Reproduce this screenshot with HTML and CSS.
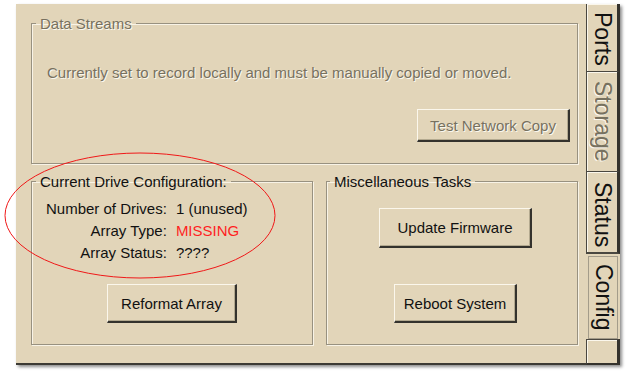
FILE: index.html
```html
<!DOCTYPE html>
<html lang="en">
<head>
    <meta charset="UTF-8">
    <title>Config</title>
    <link rel="stylesheet" href="styles.css">
</head>
<body>
    <div class="window">
        <div class="panel">
            <fieldset class="group streams">
                <legend class="disabled">Data Streams</legend>
                <p class="note disabled">Currently set to record locally and must be manually copied or moved.</p>
                <div class="row-end">
                    <button class="btn btn-test" disabled>Test Network Copy</button>
                </div>
            </fieldset>

            <div class="lower">
                <fieldset class="group drive">
                    <legend>Current Drive Configuration:</legend>
                    <dl class="facts">
                        <dt>Number of Drives:</dt>
                        <dd>1 (unused)</dd>
                        <dt>Array Type:</dt>
                        <dd class="missing">MISSING</dd>
                        <dt>Array Status:</dt>
                        <dd>????</dd>
                    </dl>
                    <div class="row-center">
                        <button class="btn btn-reformat">Reformat Array</button>
                    </div>
                </fieldset>

                <fieldset class="group misc">
                    <legend>Miscellaneous Tasks</legend>
                    <div class="row-center first">
                        <button class="btn btn-firmware">Update Firmware</button>
                    </div>
                    <div class="row-center">
                        <button class="btn btn-reboot">Reboot System</button>
                    </div>
                </fieldset>
            </div>
        </div>

        <div class="tabs">
            <div class="tab tab-ports">Ports</div>
            <div class="tab tab-storage disabled">Storage</div>
            <div class="tab tab-status">Status</div>
            <div class="tab tab-config">Config</div>
            <div class="tab tab-filler"></div>
        </div>
    </div>

    <svg class="callout" width="634" height="374" viewBox="0 0 634 374">
        <ellipse cx="140" cy="215.5" rx="135" ry="62.5" fill="none" stroke="#f01818" stroke-width="1"/>
    </svg>
</body>
</html>
```

FILE: styles.css
```css
body {
    margin: 0;
    background: #fff;
    font-family: 'Liberation Sans', Arial, sans-serif;
    font-size: 15px;
    color: #111;
    position: relative;
    width: 634px;
    height: 374px;
    overflow: hidden;
}
.window {
    display: flex;
    margin: 4px 0 0 16px;
    width: 604px;
    height: 361px;
    background: #e2d5b9;
    box-shadow: 2px 2px 3px rgba(0, 0, 0, 0.45);
}
.panel {
    box-sizing: border-box;
    width: 570px;
    height: 361px;
    padding: 11px 8px 0 15px;
    border-bottom: 2px solid #3c3a34;
}
.disabled {
    color: #77715f;
    text-shadow: 1px 1px 0 #fbf8ef;
}
.group {
    box-sizing: border-box;
    margin: 0;
    padding: 0;
    min-width: 0;
    border: 1px solid #989180;
    box-shadow: 1px 1px 0 #f8f3e6, inset 1px 1px 0 #f8f3e6;
}
.group legend {
    margin-left: 4px;
    padding: 0 4px;
    line-height: 17px;
}
.streams {
    width: 547px;
    height: 149px;
}
.note {
    margin: 32px 0 0 15px;
    line-height: 17px;
}
.row-end {
    display: flex;
    justify-content: flex-end;
    padding-right: 7px;
    margin-top: 28px;
}
.row-center {
    display: flex;
    justify-content: center;
}
.lower {
    display: flex;
    gap: 13px;
    margin-top: 9px;
}
.drive {
    width: 282px;
    height: 172px;
}
.misc {
    width: 252px;
    height: 172px;
}
.misc legend {
    margin-left: 3px;
}
.misc .row-center {
    padding-left: 7px;
}
.facts {
    display: grid;
    grid-template-columns: auto auto;
    justify-content: start;
    column-gap: 9px;
    margin: 8px 0 20px 14px;
    line-height: 22px;
}
.facts dt {
    text-align: right;
}
.facts dd {
    margin: 0;
}
.missing {
    color: #ff1f1f;
}
.misc .first {
    margin: 18px 0 36px;
}
.btn {
    box-sizing: border-box;
    font-family: inherit;
    font-size: 15px;
    color: #111;
    background: #e2d5b9;
    border-style: solid;
    border-width: 1px 2px 2px 1px;
    border-color: #fbf7ec #34322d #34322d #fbf7ec;
    box-shadow: inset -1px -1px 0 #b3a98f;
    padding: 0;
}
.btn:disabled {
    color: #77715f;
    text-shadow: 1px 1px 0 #fbf8ef;
}
.btn-test {
    width: 153px;
    height: 33px;
}
.btn-reformat {
    width: 130px;
    height: 39px;
}
.btn-firmware {
    width: 153px;
    height: 40px;
}
.btn-reboot {
    width: 123px;
    height: 39px;
}
.tabs {
    display: flex;
    flex-direction: column;
    width: 34px;
}
.tab {
    box-sizing: border-box;
    writing-mode: vertical-rl;
    font-size: 23px;
    display: flex;
    align-items: center;
    border-left: 1px solid #4a4740;
    border-right: 3px solid #34322d;
    border-bottom: 1px solid #4a4740;
    box-shadow: inset 1px 1px 0 #fbf7ec;
    padding-top: 8px;
}
.tab-ports {
    height: 68px;
}
.tab-storage {
    height: 100px;
    padding-top: 9px;
}
.tab-status {
    height: 82px;
    padding-top: 10px;
    border-bottom-width: 2px;
}
.tab-config {
    height: 83px;
    margin: 2px 2px 0 2px;
    border: 1px solid #a49c8a;
    padding-top: 7px;
    box-shadow: none;
}
.tab-filler {
    flex: 1;
    border-top: 1px solid #4a4740;
    border-bottom: 2px solid #34322d;
}
.callout {
    position: absolute;
    left: 0;
    top: 0;
    pointer-events: none;
}
```
